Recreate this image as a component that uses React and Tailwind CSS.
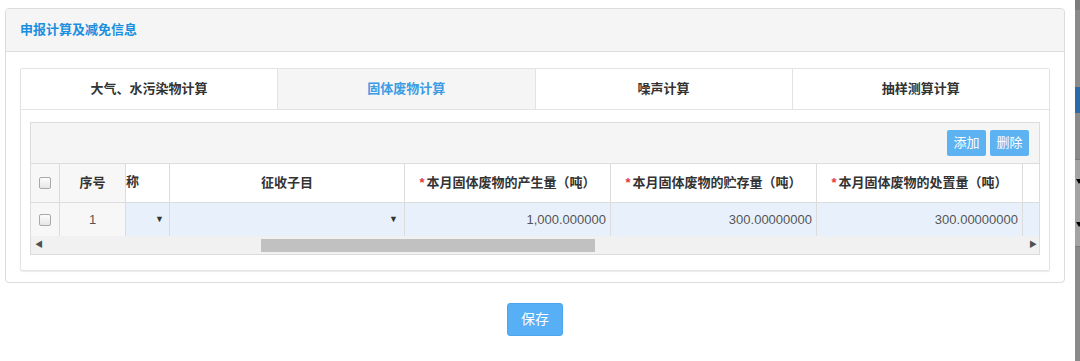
const font = { fontFamily: '"Liberation Sans", "Noto Sans CJK SC", sans-serif' };

const tabs = ['大气、水污染物计算', '固体废物计算', '噪声计算', '抽样测算计算'];

function Checkbox() {
    return (
        <span className="block w-[12px] h-[12px] rounded-[2px] border border-[#a9a9a9] bg-gradient-to-b from-[#fdfdfd] to-[#e6e6e6]" />
    );
}

function HeadCell({ w, required, children, className = '' }) {
    return (
        <div className={`${w} shrink-0 h-full flex items-center justify-center border-r border-[#dcdcdc] text-[13px] font-bold text-[#333] ${className}`}>
            {required && <span className="text-[#e4393c] mr-[2px]">*</span>}
            {children}
        </div>
    );
}

export default function App() {
    return (
        <div className="flex w-[1080px] h-[361px] bg-white overflow-hidden" style={font}>
            <div className="flex-1">
                {/* outer panel */}
                <div className="ml-[5px] mr-[10px] mt-[8px] border border-[#dcdcdc] rounded-[4px]">
                    <div className="h-[43px] bg-[#f5f5f5] border-b border-[#dcdcdc] rounded-t-[4px] flex items-center px-[14px]">
                        <span className="text-[13px] font-bold text-[#1b8fdf]">申报计算及减免信息</span>
                    </div>

                    <div className="px-[14px] pt-[16px] pb-[11px]">
                        {/* tab box */}
                        <div className="border border-[#e3e3e3] rounded-[2px] shadow-[0_1px_1px_rgba(0,0,0,0.08)]">
                            <div className="flex h-[41px] border-b border-[#e3e3e3]">
                                {tabs.map((t, i) => (
                                    <div
                                        key={t}
                                        className={`flex-1 flex items-center justify-center text-[13px] font-bold ${i < 3 ? 'border-r border-[#e3e3e3]' : ''} ${i === 1 ? 'bg-[#f5f5f5] text-[#3c9ce4]' : 'bg-white text-[#333]'}`}
                                    >
                                        {t}
                                    </div>
                                ))}
                            </div>

                            <div className="px-[9px] pt-[12px] pb-[15px]">
                                {/* grid */}
                                <div className="border border-[#dcdcdc]">
                                    <div className="h-[41px] bg-[#f5f5f5] border-b border-[#dcdcdc] flex items-center justify-end gap-[4px] pr-[10px]">
                                        <button className="w-[39px] h-[26px] rounded-[2px] bg-[#5db2f2] text-white text-[13px]">添加</button>
                                        <button className="w-[39px] h-[26px] rounded-[2px] bg-[#5db2f2] text-white text-[13px]">删除</button>
                                    </div>

                                    {/* header row */}
                                    <div className="flex h-[39px] border-b border-[#dcdcdc] bg-white">
                                        <div className="w-[29px] shrink-0 h-full flex items-center justify-center bg-[#f7f7f7] border-r border-[#dcdcdc]">
                                            <Checkbox />
                                        </div>
                                        <HeadCell w="w-[66px]" className="bg-[#f7f7f7]">序号</HeadCell>
                                        <div className="w-[44px] shrink-0 h-full border-r border-[#dcdcdc] flex items-start pt-[8px] text-[13px] font-bold text-[#333]">称</div>
                                        <HeadCell w="w-[235px]">征收子目</HeadCell>
                                        <HeadCell w="w-[206px]" required>本月固体废物的产生量（吨）</HeadCell>
                                        <HeadCell w="w-[206px]" required>本月固体废物的贮存量（吨）</HeadCell>
                                        <HeadCell w="w-[206px]" required>本月固体废物的处置量（吨）</HeadCell>
                                        <div className="flex-1" />
                                    </div>

                                    {/* data row */}
                                    <div className="flex h-[33px] text-[13px] text-[#555]">
                                        <div className="w-[29px] shrink-0 h-full flex items-center justify-center bg-[#f7f7f7] border-r border-[#dcdcdc]">
                                            <Checkbox />
                                        </div>
                                        <div className="w-[66px] shrink-0 h-full flex items-center justify-center bg-[#f7f7f7] border-r border-[#dcdcdc]">1</div>
                                        <div className="w-[44px] shrink-0 h-full flex items-center justify-end pr-[5px] bg-[#e8f1fb] border-r border-[#dcdcdc] text-[9px] text-[#333]">▼</div>
                                        <div className="w-[235px] shrink-0 h-full flex items-center justify-end pr-[6px] bg-[#e8f1fb] border-r border-[#dcdcdc] text-[9px] text-[#333]">▼</div>
                                        <div className="w-[206px] shrink-0 h-full flex items-center justify-end pr-[4px] bg-[#e8f1fb] border-r border-[#dcdcdc]">1,000.000000</div>
                                        <div className="w-[206px] shrink-0 h-full flex items-center justify-end pr-[4px] bg-[#e8f1fb] border-r border-[#dcdcdc]">300.00000000</div>
                                        <div className="w-[206px] shrink-0 h-full flex items-center justify-end pr-[4px] bg-[#e8f1fb] border-r border-[#dcdcdc]">300.00000000</div>
                                        <div className="flex-1 bg-[#e8f1fb]" />
                                    </div>

                                    {/* horizontal scrollbar */}
                                    <div className="flex items-center h-[18px] bg-[#f1f1f1] px-[4px]">
                                        <span className="text-[8px] text-[#505050] w-[10px]">◀</span>
                                        <div className="ml-[216px] w-[334px] h-[13px] bg-[#c1c1c1]" />
                                        <div className="flex-1" />
                                        <span className="text-[8px] text-[#505050] w-[6px]">▶</span>
                                    </div>
                                </div>
                            </div>
                        </div>
                    </div>
                </div>

                <div className="flex justify-center mt-[20px] pr-[5px]">
                    <button className="w-[56px] h-[33px] rounded-[3px] bg-[#57aff6] border border-[#4ba6ee] text-white text-[14px]">保存</button>
                </div>
            </div>

            {/* edge of the neighbouring window */}
            <div className="w-[5px] h-full bg-[#8a8a8a] flex flex-col">
                <div className="h-[10px] bg-[#7c7c7c]" />
                <div className="h-[77px]" />
                <div className="h-[26px] bg-[#2f6aa8]" />
                <div className="h-[46px]" />
                <div className="h-[88px] bg-[#a3a3a3] border-y border-[#7a7a7a] flex flex-col justify-around pl-[1px]">
                    <span className="block w-0 h-0 border-x-[3px] border-x-transparent border-t-[5px] border-t-black" />
                    <span className="block w-0 h-0 border-x-[3px] border-x-transparent border-t-[5px] border-t-black" />
                </div>
            </div>
        </div>
    );
}
